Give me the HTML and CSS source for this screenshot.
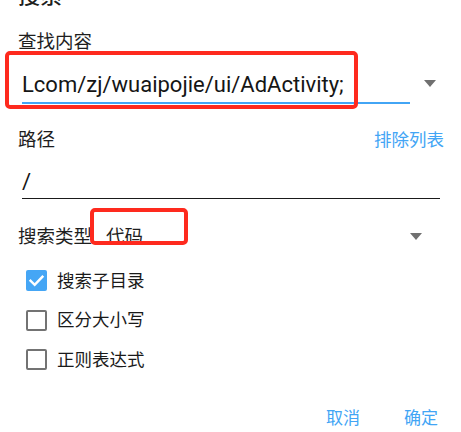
FILE: index.html
```html
<!DOCTYPE html>
<html lang="zh-CN">
<head>
<meta charset="utf-8">
<title>搜索</title>
<link rel="stylesheet" href="styles.css">
</head>
<body>
<div class="dialog">
  <div class="title">搜索</div>
  <div class="label find-label">查找内容</div>
  <div class="combo">
    <div class="edit edit-active">Lcom/zj/wuaipojie/ui/AdActivity;</div>
    <span class="caret caret-find"></span>
  </div>
  <div class="label-row">
    <span class="label">路径</span>
    <span class="link">排除列表</span>
  </div>
  <div class="edit edit-path">/</div>
  <div class="type-row">
    <span class="label">搜索类型</span>
    <span class="type-value">代码</span>
    <span class="caret caret-type"></span>
  </div>
  <ul class="checks">
    <li class="check-item">
      <span class="box box-on"><svg viewBox="0 0 21 21" width="21" height="21"><polyline points="4.6,10.8 8.7,14.8 16.4,6.8" fill="none" stroke="#fff" stroke-width="2.5" stroke-linecap="square"/></svg></span>
      <span class="check-text">搜索子目录</span>
    </li>
    <li class="check-item">
      <span class="box"></span>
      <span class="check-text">区分大小写</span>
    </li>
    <li class="check-item">
      <span class="box"></span>
      <span class="check-text">正则表达式</span>
    </li>
  </ul>
  <div class="actions">
    <span class="btn">取消</span>
    <span class="btn">确定</span>
  </div>
</div>
<div class="mark mark-find"></div>
<div class="mark mark-type"></div>
</body>
</html>
```
FILE: styles.css
```css
html, body {
  margin: 0;
  padding: 0;
  background: #ffffff;
}

body {
  width: 461px;
  height: 432px;
  overflow: hidden;
  position: relative;
  font-family: Roboto, "Noto Sans CJK SC", sans-serif;
  color: #1c1c1c;
}

.dialog {
  padding: 0 17px 0 18px;
}

.title {
  margin-top: -17px;
  height: 26px;
  line-height: 26px;
  font-size: 22px;
  font-weight: 500;
  color: #202020;
}

.label {
  font-size: 18.5px;
  line-height: 26px;
  color: #1e1e1e;
}

.find-label {
  margin-top: 20px;
  height: 26px;
}

.combo {
  display: flex;
  align-items: flex-start;
  padding-right: 8px;
}

.edit {
  font-size: 22px;
  line-height: 30px;
  color: #151515;
  white-space: nowrap;
}

.edit-active {
  flex: 1;
  margin-left: 4px;
  margin-right: 14px;
  padding-top: 15px;
  padding-bottom: 2px;
  border-bottom: 2px solid #42a5f5;
}

.caret {
  width: 0;
  height: 0;
  border-left: 6px solid transparent;
  border-right: 6px solid transparent;
  border-top: 7px solid #707070;
}

.caret-find {
  margin-top: 25px;
}

.label-row {
  display: flex;
  justify-content: space-between;
  align-items: center;
  margin-top: 23px;
  height: 26px;
}

.link {
  font-size: 17.5px;
  line-height: 26px;
  color: #42a5f5;
}

.edit-path {
  margin: 0 4px;
  padding-top: 14px;
  padding-bottom: 1px;
  border-bottom: 1px solid #1a1a1a;
}

.type-row {
  display: flex;
  align-items: center;
  margin-top: 25px;
  height: 26px;
}

.type-value {
  flex: 1;
  margin-left: 14px;
  font-size: 18.5px;
  line-height: 26px;
  color: #1e1e1e;
}

.caret-type {
  margin-right: 22px;
  margin-top: -1px;
}

.checks {
  list-style: none;
  margin: 11px 0 0;
  padding: 0;
}

.check-item {
  display: flex;
  align-items: center;
  height: 39.5px;
  padding-left: 8px;
}

.box {
  width: 21px;
  height: 21px;
  box-sizing: border-box;
  border: 2.5px solid #737373;
  border-radius: 2px;
  flex: none;
}

.box-on {
  border: none;
  background: #45a6f5;
  display: flex;
}

.check-text {
  margin-left: 10px;
  font-size: 17.5px;
  line-height: 26px;
  color: #1a1a1a;
}

.actions {
  display: flex;
  justify-content: flex-end;
  gap: 44px;
  margin-top: 25px;
  margin-right: 6px;
}

.btn {
  font-size: 17px;
  line-height: 26px;
  color: #42a5f5;
}

.mark {
  position: absolute;
  box-sizing: border-box;
  border: 4px solid #fe2a1e;
  border-radius: 5px;
}

.mark-find {
  left: 5px;
  top: 51px;
  width: 353px;
  height: 58px;
}

.mark-type {
  left: 90px;
  top: 208px;
  width: 98px;
  height: 37px;
}
```
